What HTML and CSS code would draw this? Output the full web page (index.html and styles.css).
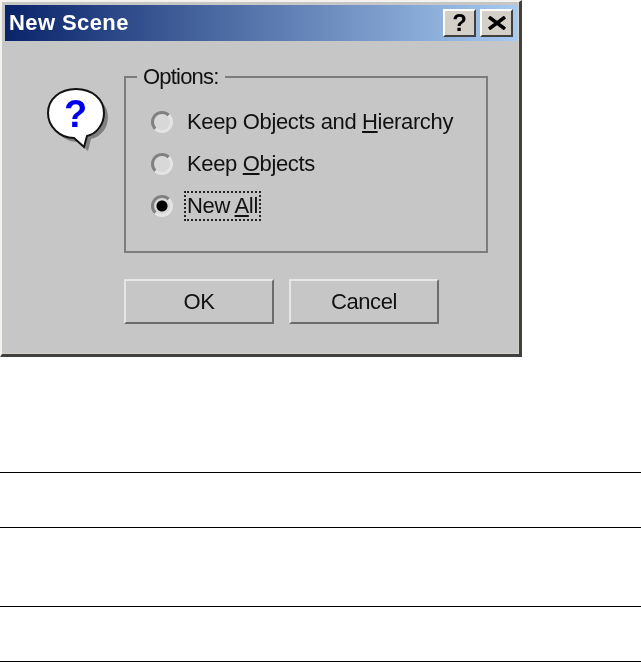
FILE: index.html
```html
<!DOCTYPE html>
<html lang="en">

<head>
    <meta charset="UTF-8">
    <meta name="viewport" content="width=device-width, initial-scale=1.0">
    <title>New Scene</title>
    <link rel="stylesheet" href="styles.css">
</head>

<body>
    <div class="dialog">
        <div class="title-bar">
            <span class="title-text">New Scene</span>
            <div class="title-buttons">
                <button class="title-btn">?</button>
                <button class="title-btn close-btn">
                    <svg width="20" height="14" viewBox="0 0 20 14">
                        <path d="M2 1 L18 13 M18 1 L2 13" stroke="#000" stroke-width="3.5" fill="none" />
                    </svg>
                </button>
            </div>
        </div>

        <div class="dialog-body">
            <svg class="bubble-icon" width="68" height="68" viewBox="0 0 68 68">
                <path class="bubble-shadow" d="M32 7 C48 7 61 17 61 31 C61 43 53 51 44 53 L41 65 L31 56 C17 56 5 45 5 31 C5 17 16 7 32 7 Z" />
                <path class="bubble-fill" d="M29 3 C45 3 57 13 57 27 C57 39 49 48 40 50 L37 61 L27 52 C13 52 1 41 1 27 C1 13 13 3 29 3 Z" />
                <text class="bubble-mark" x="28.5" y="41">?</text>
            </svg>

            <div class="dialog-main">
                <fieldset class="options">
                    <legend>Options:</legend>
                    <label class="option">
                        <input type="radio" name="scene">
                        <span>Keep Objects and <u>H</u>ierarchy</span>
                    </label>
                    <label class="option">
                        <input type="radio" name="scene">
                        <span>Keep <u>O</u>bjects</span>
                    </label>
                    <label class="option">
                        <input type="radio" name="scene" checked>
                        <span class="focused">New <u>A</u>ll</span>
                    </label>
                </fieldset>

                <div class="actions">
                    <button class="btn">OK</button>
                    <button class="btn">Cancel</button>
                </div>
            </div>
        </div>
    </div>

    <div class="rules">
        <div class="rule-row"></div>
        <div class="rule-row tall"></div>
        <div class="rule-row"></div>
    </div>
</body>

</html>
```

FILE: styles.css
```css
/* Global Styles */
* {
    margin: 0;
    padding: 0;
    box-sizing: border-box;
    font-family: 'Liberation Sans', Arial, sans-serif;
}

body {
    background-color: #fff;
    color: #111;
}

/* Dialog window */
.dialog {
    width: 522px;
    height: 357px;
    padding: 3px 2px 3px 3px;
    background-color: #c6c6c6;
    border-style: solid;
    border-width: 2px 3px 3px 2px;
    border-color: #f4f2ec #404040 #404040 #f4f2ec;
    box-shadow: inset -1px -1px 0 #d4d0c8;
    filter: blur(0.6px);
}

.title-bar {
    display: flex;
    justify-content: space-between;
    align-items: center;
    height: 36px;
    padding: 0 4px;
    background: linear-gradient(to right, #0a246a, #a6caf0);
}

.title-text {
    color: #fff;
    font-size: 22px;
    font-weight: bold;
    letter-spacing: 0.4px;
}

.title-buttons {
    display: flex;
    gap: 4px;
}

.title-btn {
    display: flex;
    align-items: center;
    justify-content: center;
    width: 33px;
    height: 28px;
    background-color: #d4d0c8;
    border-style: solid;
    border-width: 2px;
    border-color: #fff #404040 #404040 #fff;
    font-size: 24px;
    font-weight: bold;
    color: #000;
}

/* Dialog contents */
.dialog-body {
    display: flex;
    height: 310px;
    padding: 47px 0 2px 42px;
}

.bubble-icon {
    flex: none;
    margin-top: -2px;
}

.bubble-shadow {
    fill: #808080;
}

.bubble-fill {
    fill: #fff;
    stroke: #111;
    stroke-width: 2;
}

.bubble-mark {
    fill: #0000f0;
    font-size: 38px;
    font-weight: bold;
    text-anchor: middle;
}

.dialog-main {
    width: 364px;
    margin-left: 9px;
}

.options {
    height: 190px;
    margin-top: -25px;
    padding: 10px 0 0 25px;
    border: 2px solid #7c7c7c;
}

.options legend {
    margin-left: -14px;
    padding: 0 6px;
    font-size: 22px;
    line-height: 28px;
    letter-spacing: -0.8px;
}

.option {
    display: flex;
    align-items: center;
    gap: 14px;
    height: 42px;
    font-size: 22px;
    letter-spacing: -0.35px;
}

.option input {
    appearance: none;
    flex: none;
    width: 22px;
    height: 22px;
    border-radius: 50%;
    border: 3px solid;
    border-color: #808080 #e4e4e4 #e4e4e4 #808080;
    background-color: #d8d8d8;
}

.option input:checked {
    background: radial-gradient(circle, #000 0 5px, #d8d8d8 6px);
}

.focused {
    padding: 0 1px;
    border: 2px dotted #222;
    margin-left: -3px;
}

.actions {
    display: flex;
    gap: 15px;
    margin-top: 26px;
}

.btn {
    width: 150px;
    height: 45px;
    background-color: #c6c6c6;
    border-style: solid;
    border-width: 2px;
    border-color: #e6e6e6 #6c6c6c #6c6c6c #e6e6e6;
    color: #111;
    font-size: 22px;
    letter-spacing: -0.4px;
}

/* Empty table lines under the dialog */
.rules {
    margin-top: 115px;
    border-bottom: 1px solid #000;
}

.rule-row {
    height: 55px;
    border-top: 1px solid #000;
}

.rule-row.tall {
    height: 79px;
}
```
